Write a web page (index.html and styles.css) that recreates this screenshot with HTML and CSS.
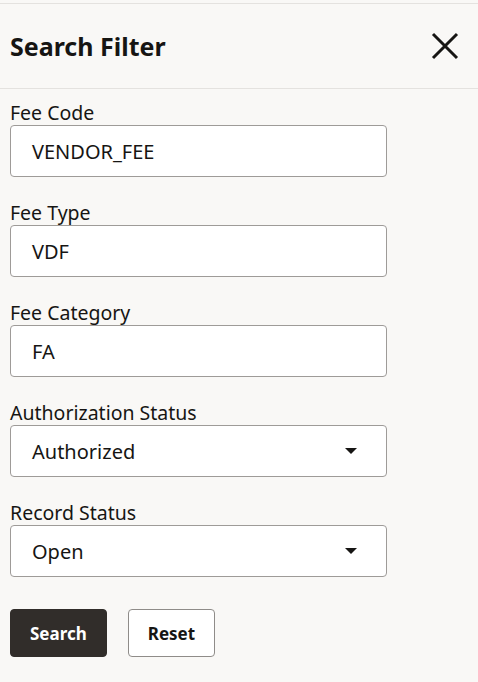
FILE: index.html
```html
<!DOCTYPE html>
<html>
<head>
    <title>Search Filter</title>
    <link rel="stylesheet" href="styles.css">
</head>
<body>
    <div class="panel">
        <div class="header">
            <h2>Search Filter</h2>
            <button class="close" aria-label="Close">
                <svg width="28" height="28" viewBox="0 0 28 28">
                    <path d="M2 2 L26 26 M26 2 L2 26" stroke="#161513" stroke-width="3" fill="none"/>
                </svg>
            </button>
        </div>
        <div class="content">
            <div class="field">
                <label for="feeCode">Fee Code</label>
                <div class="box">VENDOR_FEE</div>
            </div>
            <div class="field">
                <label for="feeType">Fee Type</label>
                <div class="box">VDF</div>
            </div>
            <div class="field">
                <label for="feeCategory">Fee Category</label>
                <div class="box">FA</div>
            </div>
            <div class="field">
                <label>Authorization Status</label>
                <div class="box select">
                    <span>Authorized</span>
                    <span class="arrow"></span>
                </div>
            </div>
            <div class="field">
                <label>Record Status</label>
                <div class="box select">
                    <span>Open</span>
                    <span class="arrow"></span>
                </div>
            </div>
            <div class="actions">
                <button class="btn primary">Search</button>
                <button class="btn">Reset</button>
            </div>
        </div>
    </div>
</body>
</html>
```

FILE: styles.css
```css
body {
    margin: 0;
    background: #f9f8f6;
    font-family: "Noto Sans", sans-serif;
    color: #161513;
}
.panel {
    margin-top: 3px;
    border-top: 1px solid #e4e2df;
    width: 478px;
}
.header {
    height: 84px;
    display: flex;
    align-items: center;
    justify-content: space-between;
    padding: 0 19px 0 10px;
    border-bottom: 1px solid #e4e2df;
}
.header h2 {
    margin: 0;
    font-size: 25px;
    font-weight: 700;
}
.close {
    background: none;
    border: none;
    padding: 0;
    width: 28px;
    height: 28px;
    display: flex;
}
.content {
    padding: 12px 10px;
}
.field {
    margin-bottom: 24px;
    width: 377px;
}
label {
    display: block;
    font-size: 19.5px;
    line-height: 24px;
}
.box {
    height: 50px;
    border: 1px solid #9e9b98;
    border-radius: 4px;
    background: #fff;
    display: flex;
    align-items: center;
    padding: 0 29px 0 21px;
    font-size: 20px;
}
.select {
    justify-content: space-between;
}
.arrow {
    width: 0;
    height: 0;
    border-left: 6px solid transparent;
    border-right: 6px solid transparent;
    border-top: 6px solid #161513;
}
.actions {
    display: flex;
    gap: 21px;
    margin-top: 32px;
}
.btn {
    height: 48px;
    padding: 0 19px;
    border: 1px solid #8f8c89;
    border-radius: 4px;
    background: #fff;
    color: #161513;
    font-family: "Noto Sans", sans-serif;
    font-size: 17px;
    font-weight: 700;
    cursor: pointer;
}
.btn.primary {
    background: #312d2a;
    border-color: #312d2a;
    color: #fff;
}
```
